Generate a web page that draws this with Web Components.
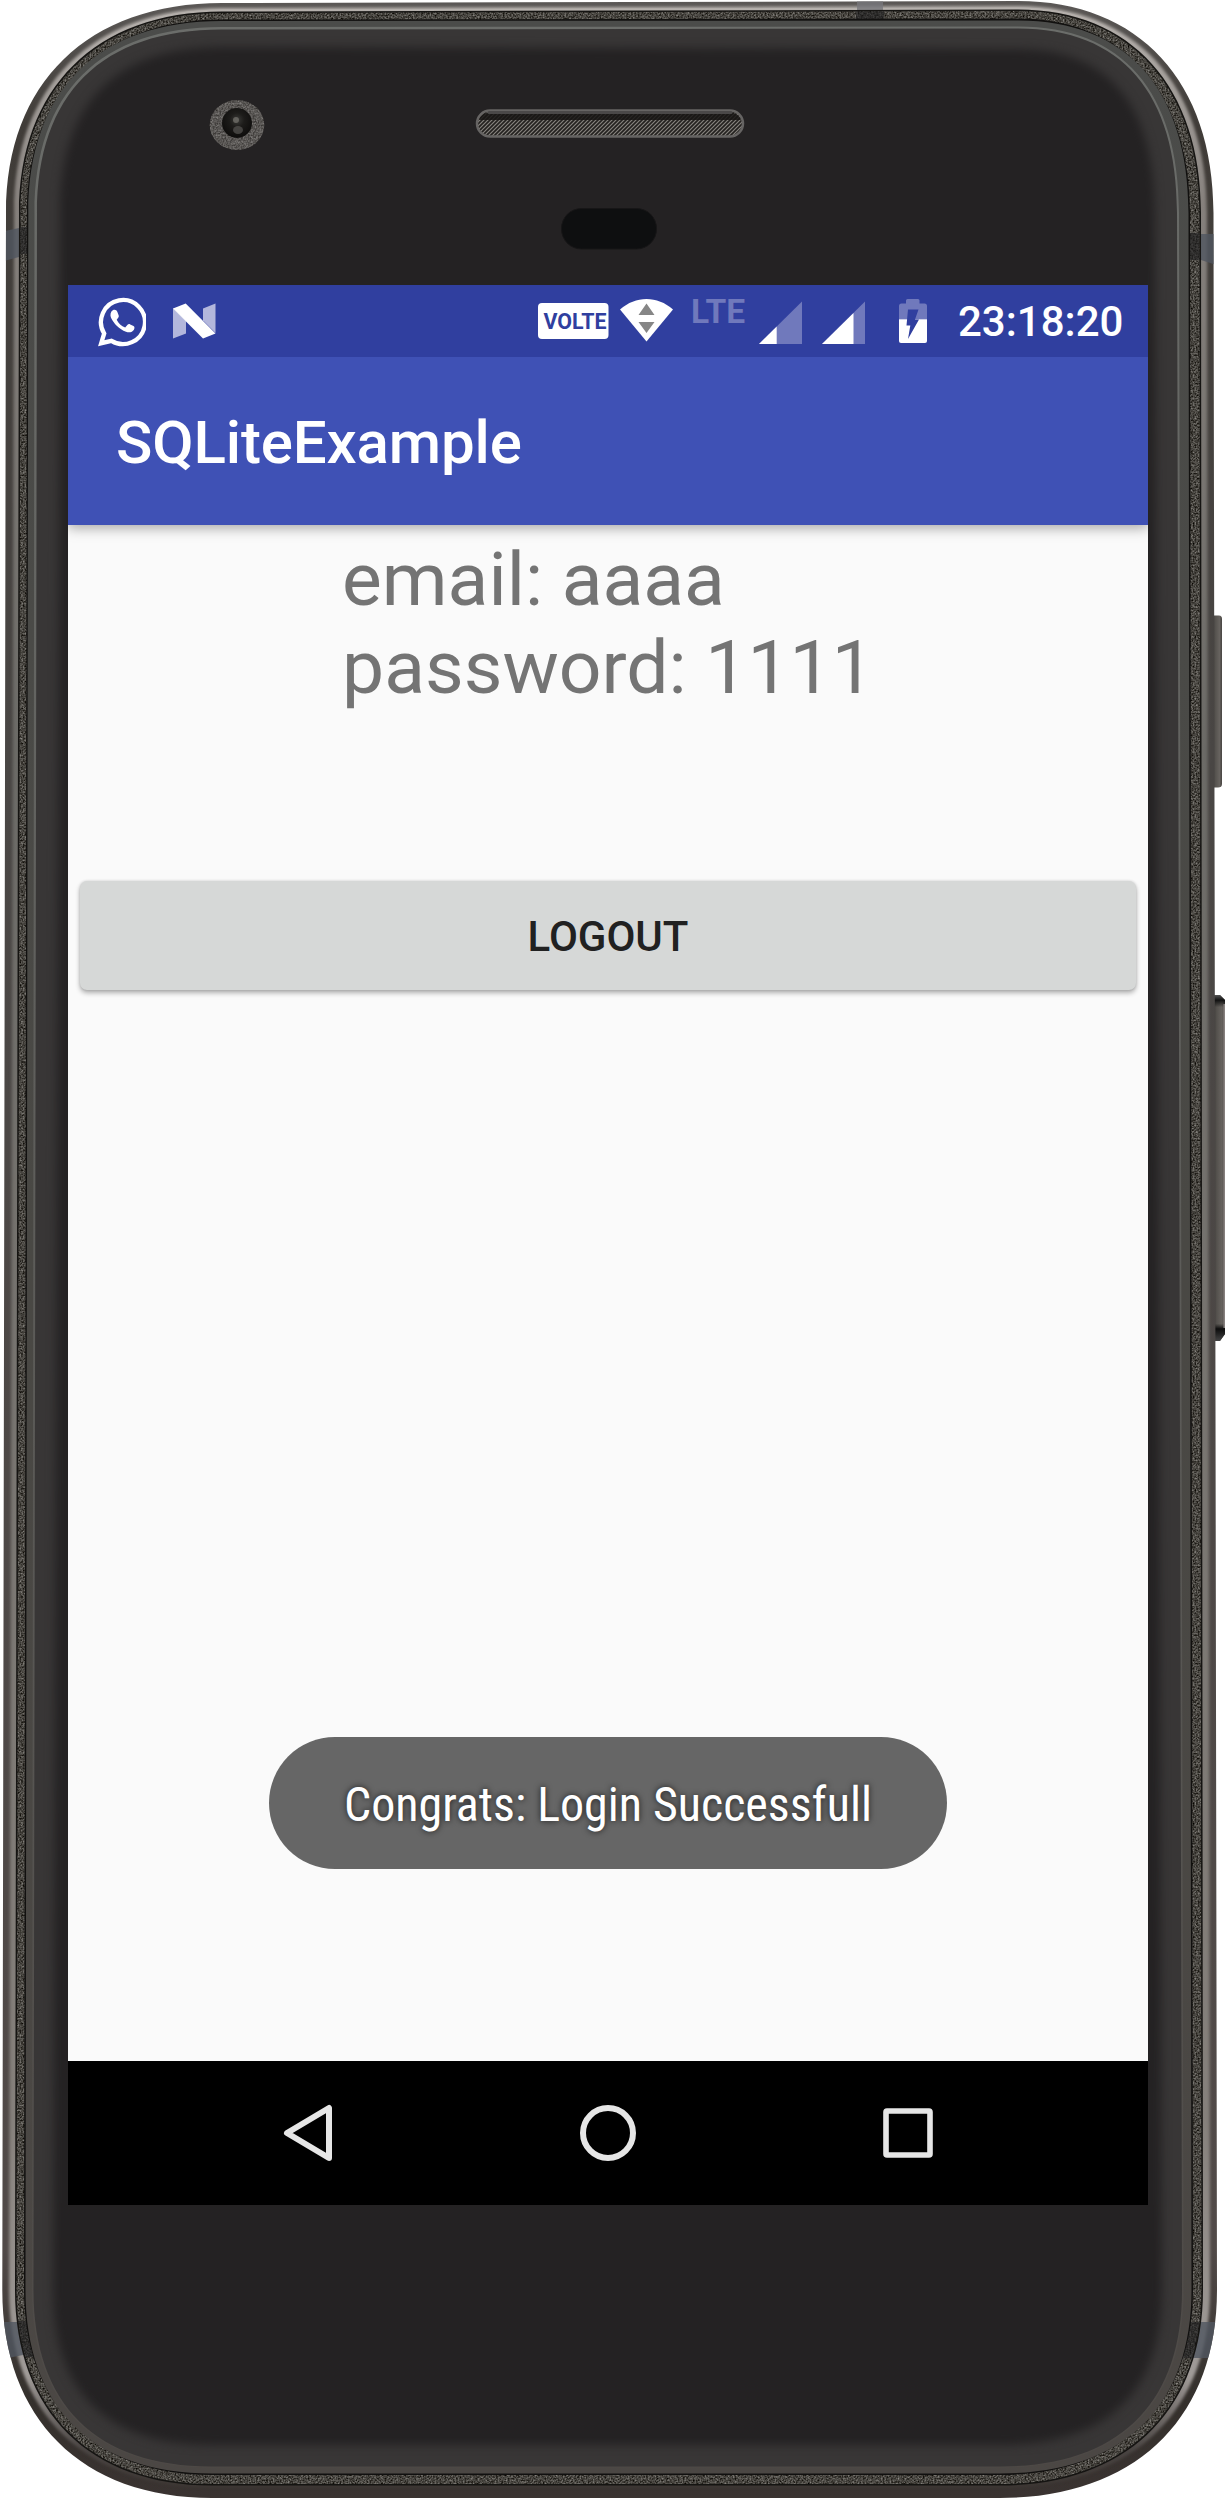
<!DOCTYPE html>
<html lang="en">
<head>
<meta charset="utf-8">
<title>SQLiteExample</title>
<style>
body{margin:0;background:#fff;font-family:Roboto,sans-serif}
</style>
</head>
<body>
<phone-frame>
  <status-bar></status-bar>
  <app-bar>SQLiteExample</app-bar>
  <app-content>
    <account-info email="aaaa" password="1111"></account-info>
    <raised-button>LOGOUT</raised-button>
    <toast-message slot="toast" text="Congrats: Login Successfull"></toast-message>
  </app-content>
  <nav-bar></nav-bar>
</phone-frame>
<script>
const define=(name,html,init)=>customElements.define(name,class extends HTMLElement{
  constructor(){
    super();
    const t=document.createElement('template');
    t.innerHTML=html;
    this.attachShadow({mode:'open'}).append(t.content.cloneNode(true));
  }
  connectedCallback(){ if(init) init(this,this.shadowRoot); }
});

/* Closed outline with four soft corners; the sides lean slightly outwards towards the bottom. */
const shell=(lt,lb,rt,rb,tl,tr,b,k=.62)=>{
  const x1=222,x2=1018,y1=213,y2=2290,x3=212,x4=1000;
  const m=(a,c)=>a+(c-a)*k;
  return `M${lt},${y1}C${lt},${m(y1,tl)} ${m(x1,lt)},${tl} ${x1},${tl}L${x2},${tr}`+
    `C${m(x2,rt)},${tr} ${rt},${m(y1,tr)} ${rt},${y1}L${rb},${y2}`+
    `C${rb},${m(y2,b)} ${m(x4,rb)},${b} ${x4},${b}L${x3},${b}`+
    `C${m(x3,lb)},${b} ${lb},${m(y2,b)} ${lb},${y2}Z`;
};
const outer=shell(6,2.3,1213.5,1217,3,1,2498);
const rim=shell(14,9,1207,1210,8,6,2488);
const rimIn=shell(18.3,14,1202,1204,11,9,2486);
const line1=shell(19,15,1201,1203,11.5,9.5,2485.5);
const grain=shell(20.5,16.5,1199.5,1201.5,13,11,2484);
const line2=shell(27,24,1190,1193,19.5,18.5,2475);
const band=shell(28.3,25.5,1188.5,1191.5,21,20.5,2473.5,.64);
const hi=shell(34.5,32,1179,1183.5,27,26.5,2467.5,.65);
const glass=shell(37,33.5,1177,1182,29.5,28.5,2466.5,.65);
const core=shell(60,53,1155,1162,47,49,2445,.66);

define('phone-frame',`
<style>
:host{display:block;position:relative;box-sizing:border-box;width:1226px;height:2502px;padding:285px 78px 297px 68px;overflow:hidden}
.case{position:absolute;inset:0;display:block}
filter{color-interpolation-filters:sRGB}
.screen{position:relative;display:flex;flex-direction:column;width:1080px;height:1920px;background:#fafafa}
</style>
<svg class="case" width="1226" height="2502" viewBox="0 0 1226 2502" aria-hidden="true">
<defs>
<linearGradient id="rim" x1="0" y1="0" x2="0" y2="1"><stop offset="0" stop-color="#5b5856"/><stop offset=".05" stop-color="#403c38"/><stop offset=".3" stop-color="#494644"/><stop offset=".9" stop-color="#514a48"/><stop offset=".96" stop-color="#34302c"/><stop offset="1" stop-color="#3a3331"/></linearGradient>
<linearGradient id="shine" x1="0" y1="0" x2="0" y2="1"><stop offset="0" stop-color="#b5b0ac"/><stop offset=".08" stop-color="#85807c"/><stop offset=".3" stop-color="#6b6a66"/><stop offset=".85" stop-color="#85807b"/><stop offset=".955" stop-color="#a09b98"/><stop offset=".985" stop-color="#494442"/><stop offset="1" stop-color="#3c3633"/></linearGradient>
<linearGradient id="band" x1="0" y1="0" x2="0" y2="1"><stop offset="0" stop-color="#4b4c4a"/><stop offset=".5" stop-color="#494844"/><stop offset="1" stop-color="#4b4744"/></linearGradient>
<linearGradient id="bandHi" x1="0" y1="0" x2="0" y2="1"><stop offset="0" stop-color="#6b6d6a"/><stop offset=".6" stop-color="#5a5956"/><stop offset="1" stop-color="#4d4946"/></linearGradient>
<linearGradient id="key" x1="0" y1="0" x2="1" y2="0"><stop offset="0" stop-color="#3a3836"/><stop offset=".3" stop-color="#54514d"/><stop offset=".75" stop-color="#67635f"/><stop offset="1" stop-color="#474441"/></linearGradient>
<linearGradient id="ends" x1="0" y1="0" x2="0" y2="1"><stop offset="0" stop-color="#555"/><stop offset=".015" stop-color="#111"/><stop offset=".035" stop-color="#111" stop-opacity="0"/><stop offset=".95" stop-color="#111" stop-opacity="0"/><stop offset=".965" stop-color="#0c0c0c"/><stop offset="1" stop-color="#444"/></linearGradient>
<radialGradient id="lens" cx=".5" cy=".4" r=".6"><stop offset="0" stop-color="#3b3b38"/><stop offset=".4" stop-color="#1d1c1a"/><stop offset="1" stop-color="#0d0c0b"/></radialGradient>
<pattern id="mesh" width="4" height="4" patternUnits="userSpaceOnUse"><rect width="4" height="4" fill="#23211f"/><path d="M-1,5L5,-1M-1,1L1,-1M3,5L5,3" stroke="#85827d" stroke-width="1.2"/></pattern>
<filter id="soft" x="-5%" y="-5%" width="110%" height="110%"><feGaussianBlur stdDeviation="5"/></filter>
<filter id="rimsoft" x="-5%" y="-5%" width="110%" height="110%"><feGaussianBlur stdDeviation="1.5"/></filter>
<filter id="noise" x="0" y="0" width="100%" height="100%"><feTurbulence type="fractalNoise" baseFrequency=".6" numOctaves="2" seed="4" result="n"/><feColorMatrix in="n" type="matrix" values=".7 0 0 0 -.07  .7 0 0 0 -.08  .7 0 0 0 -.1  0 0 0 0 1"/><feComposite in2="SourceGraphic" operator="in"/></filter>
<clipPath id="oc"><path d="${outer}"/></clipPath>
<clipPath id="gc"><path d="${grain}"/></clipPath>
<clipPath id="glc"><path d="${glass}"/></clipPath>
</defs>
<path d="M1212,615.5H1219Q1222,615.5 1222,619V784Q1222,787.5 1218,787.5H1212Z" fill="url(#key)"/>
<path d="M1213,995H1220L1225,1000V1334L1220,1341H1213Z" fill="url(#key)"/>
<path d="M1213,995H1220L1225,1000V1334L1220,1341H1213Z" fill="url(#ends)"/>
<path d="M1224.2,1004V1328" stroke="#8a8482" stroke-width="1.5"/>
<path d="${outer}" fill="url(#rim)"/>
<g clip-path="url(#oc)"><path d="${rim}" fill="url(#shine)" filter="url(#rimsoft)"/><path d="${rimIn}" fill="none" stroke="url(#shine)" stroke-width="3"/>
<g fill="#505660" opacity=".8"><path d="M0,232L19,228V257L0,262Z"/><path d="M857,0H883V10H857Z" fill="#77777c"/><path d="M1201,234H1216V265L1201,260Z"/><path d="M0,2322H20L28,2354L8,2358Z"/><path d="M1199,2322H1220V2358H1192Z"/></g></g>
<path d="${line1}" fill="#151412"/>
<path d="${grain}" fill="#47453f" filter="url(#noise)"/>
<g clip-path="url(#gc)" fill="#1e1e20" opacity=".6"><path d="M16,227H30V254H16Z"/><path d="M856,8H884V22H856Z"/><path d="M1186,233H1202V260H1186Z"/><path d="M14,2321H30L36,2357H20Z"/><path d="M1184,2322H1206L1200,2358H1180Z"/></g>
<path d="${line2}" fill="#11100f"/>
<path d="${band}" fill="url(#band)"/>
<path d="${hi}" fill="url(#bandHi)"/>
<path d="${glass}" fill="#383636"/>
<path d="${core}" fill="#242223" filter="url(#soft)" clip-path="url(#glc)"/>
<ellipse cx="237" cy="125" rx="27.3" ry="25" fill="#666" filter="url(#noise)"/>
<ellipse cx="237" cy="125" rx="27.3" ry="25" fill="#7a787c" opacity=".35"/>
<circle cx="237" cy="123" r="15" fill="url(#lens)"/>
<circle cx="236" cy="120" r="3" fill="#777671" opacity=".7"/><ellipse cx="238" cy="130" rx="5" ry="4" fill="#5c5b57" opacity=".65"/>
<rect x="477" y="110.5" width="266" height="26" rx="13" fill="url(#mesh)" stroke="#666463" stroke-width="2.5"/>
<path d="M488,112.5H732Q739,114 741,120H479Q481,114 488,112.5Z" fill="#171514" opacity=".85"/>
<path d="M489,112.5H731" stroke="#4a4848" stroke-width="3" stroke-linecap="round"/>
<rect x="561.5" y="208.5" width="95" height="40.5" rx="20" fill="#0e0f10" stroke="#171617"/>
</svg>
<div class="screen"><slot></slot></div>`);

define('status-bar',`
<style>
:host{display:flex;align-items:center;flex:none;height:72px;background:#303f9f;color:#fff}
svg{display:block;flex:none}
.wa{margin-left:30px}.n{margin-left:27px}
.badge{margin-left:auto}
.wifi{margin-left:11px}.lte{margin-left:17px}.s1{margin-left:11px}.s2{margin-left:20px}.bat{margin-left:34px}
time{flex:none;box-sizing:border-box;width:221px;padding:2px 0 0 31px;font-size:42px;font-weight:500;line-height:72px;white-space:nowrap}
</style>
<svg class="wa" width="48" height="72" viewBox="0 0 48 72"><path d="M6.2,48.5A22,22 0 1 1 13.5,55.8L3.2,58.2Z" fill="none" stroke="#fff" stroke-width="4.3" stroke-linejoin="miter"/><path d="M14.8,25.2C16.8,24.3 18.7,25 19.3,26.8L20.7,30.5C21.2,32 20,33.1 18.7,34.7C20.4,38.2 23.4,41.2 27.2,42.6L29.8,39.6C30.5,38.8 31.4,39 32.2,39.4L35.5,41.1C37,41.9 36.5,43.7 35.9,44.8C34.5,47.3 31,48 28,46.8C21.2,44.2 15.9,38.8 13,32.8C11.9,30 12.5,26.5 14.8,25.2Z" fill="#fff"/></svg>
<svg class="n" width="43" height="72" viewBox="0 0 43 72"><g fill="#b3b7dc"><path d="M0,23L13,36V48.5L0,53.5Z"/><path d="M30,23.5L42.5,18.5V48L30,35.5Z"/></g><path d="M0,23.5L12.7,18.5L42.5,48.5L30,53.5Z" fill="#fff"/></svg>
<svg class="badge" width="71" height="72" viewBox="0 0 71 72"><rect x="0" y="18" width="70.5" height="36" rx="4" fill="#fff"/><text x="5.5" y="43.7" textLength="63" lengthAdjust="spacingAndGlyphs" font-size="21.6" font-weight="700" fill="#303f9f">VOLTE</text></svg>
<svg class="wifi" width="53" height="72" viewBox="0 0 53 72"><path d="M0,24.5C8,17.5 17,14 26.5,14S45,17.5 53,24.5L26.5,56.5Z" fill="#fff"/><path d="M26.5,18.5L34.5,30H18.5ZM26.5,48L18.5,37H34.5Z" fill="#868686"/></svg>
<svg class="lte" width="58" height="72" viewBox="-3 0 58 72"><text x="-2" y="38" textLength="54" lengthAdjust="spacingAndGlyphs" font-size="32.3" font-weight="700" fill="#7079bc">LTE</text></svg>
<svg class="s1" width="43" height="72" viewBox="0 0 43 72"><path d="M43,16.5V59H0Z" fill="#7079bc"/><path d="M17.7,41.5V59H0Z" fill="#fff"/></svg>
<svg class="s2" width="43" height="72" viewBox="0 0 43 72"><path d="M43,16.5V59H0Z" fill="#7079bc"/><path d="M31.5,27.9V59H0Z" fill="#fff"/></svg>
<svg class="bat" width="28" height="72" viewBox="0 0 28 72"><path d="M0,34.3V21Q0,18.5 2.5,18.5H7V15.5Q7,14 8.5,14H19Q20.5,14 20.5,15.5V18.5H25.5Q28,18.5 28,21V34.3Z" fill="#7079bc"/><path d="M0,34.3H28V56Q28,58 26,58H2Q0,58 0,56Z" fill="#fff"/><path d="M9,24.5H19.5L16,34.5H20L9,54L11.3,40.5H7.5Z" fill="#303f9f"/></svg>
<time>23:18:20</time>`);

define('app-bar',`
<style>
:host{display:flex;align-items:center;flex:none;height:168px;padding:4px 48px 0;background:#3f51b5;color:#fff;font-size:60px;font-weight:500;line-height:70px;letter-spacing:-.12px;box-shadow:0 3px 12px rgba(0,0,0,.34);clip-path:inset(0 0 -24px 0);z-index:1;box-sizing:border-box}
</style><slot></slot>`);

define('app-content',`
<style>
:host{display:flex;flex-direction:column;flex:1;min-height:0;padding:10px 12px 192px;box-sizing:border-box}
.toast{margin-top:auto;display:flex;justify-content:center}
</style><slot></slot><div class="toast"><slot name="toast"></slot></div>`);

define('account-info',`
<style>
:host{display:block;align-self:center;color:#747474;font-size:75px;line-height:88px;white-space:nowrap}
</style><div class="e"></div><div class="p"></div>`,(el,r)=>{
  r.querySelector('.e').textContent='email: '+el.getAttribute('email');
  r.querySelector('.p').textContent='password: '+el.getAttribute('password');
});

define('raised-button',`
<style>
:host{display:block;margin-top:170px}
button{display:block;box-sizing:border-box;width:100%;height:109px;padding:2px 0 0;border:0;border-radius:7px;background:#d6d8d7;color:#212121;font:500 42px/107px Roboto,sans-serif;box-shadow:0 3px 5px rgba(0,0,0,.3),0 0 3px rgba(0,0,0,.14)}
</style><button><slot></slot></button>`);

define('toast-message',`
<style>
:host{display:block;width:678px;height:132px;border-radius:66px;background:#666;color:#fff}
svg{display:block}
text{font-family:"Roboto Condensed",Roboto,sans-serif;text-shadow:0 0 6px rgba(0,0,0,.75)}
</style><svg width="678" height="132" viewBox="0 0 678 132"><text x="75" y="84" textLength="528" lengthAdjust="spacingAndGlyphs" font-size="48" fill="#fff"></text></svg>`,(el,r)=>{
  r.querySelector('text').textContent=el.getAttribute('text');
});

define('nav-bar',`
<style>
:host{display:flex;justify-content:center;gap:236px;flex:none;height:144px;background:#000}
svg{display:block}
</style>
<svg width="64" height="144" viewBox="0 0 64 144"><path d="M53,47V97L11,72Z" fill="none" stroke="#e6e6e6" stroke-width="6" stroke-linejoin="round"/></svg>
<svg width="64" height="144" viewBox="0 0 64 144"><circle cx="32" cy="72" r="25" fill="none" stroke="#e6e6e6" stroke-width="6"/></svg>
<svg width="64" height="144" viewBox="0 0 64 144"><rect x="10" y="50" width="44" height="44" rx="1" fill="none" stroke="#e6e6e6" stroke-width="5.6"/></svg>`);
</script>
</body>
</html>
